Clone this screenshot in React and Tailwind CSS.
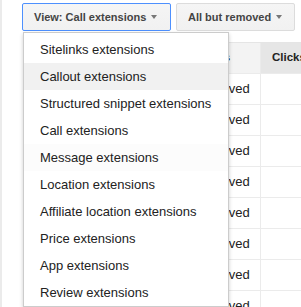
import React from "react";

const items = [
  "Sitelinks extensions",
  "Callout extensions",
  "Structured snippet extensions",
  "Call extensions",
  "Message extensions",
  "Location extensions",
  "Affiliate location extensions",
  "Price extensions",
  "App extensions",
  "Review extensions",
];

function Arrow() {
  return (
    <span className="ml-[5px] inline-block h-0 w-0 border-x-[3.5px] border-t-[4px] border-x-transparent border-t-[#777]" />
  );
}

export default function App() {
  return (
    <div className="relative h-[307px] w-[301px] overflow-hidden border-l-2 border-[#ebebeb] bg-white font-['Liberation_Sans',Arial,sans-serif]">
      {/* buttons */}
      <div className="flex gap-[5px] pl-[20px] pt-[3px]">
        <div className="flex h-[28px] w-[149px] shrink-0 items-center rounded-[2px] border border-[#4d90fe] bg-linear-to-b from-[#f5f5f5] to-[#f1f1f1] pl-[11px] text-[11px] font-bold text-[#444]">
          <span>View: Call extensions</span>
          <Arrow />
        </div>
        <div className="flex h-[28px] w-[119px] shrink-0 items-center rounded-[2px] border border-[#dcdcdc] bg-linear-to-b from-[#f5f5f5] to-[#f1f1f1] pl-[11px] text-[11px] font-bold text-[#444]">
          <span className="whitespace-nowrap">All but removed</span>
          <Arrow />
        </div>
      </div>

      {/* table behind */}
      <div className="ml-[24px] mt-[11px] w-[376px] border-t border-[#e5e5e5]">
        <div className="grid h-[31px] grid-cols-[161px_74px_141px] border-b border-[#ebebeb] text-[11.5px] font-bold text-[#222]">
          <div className="bg-[#f3f3f3]" />
          <div className="flex items-center border-r border-[#ebebeb] bg-[#f3f3f3] pl-[8px]">Status</div>
          <div className="flex items-center bg-[#e6e6e6] pl-[11px]">Clicks</div>
        </div>
        {Array.from({ length: 8 }).map((_, i) => (
          <div
            key={i}
            className="grid h-[31px] grid-cols-[161px_74px_141px] border-b border-[#ebebeb] text-[13px] text-[#222]"
          >
            <div />
            <div className="flex items-center border-r border-[#ebebeb] pl-[7px]">Removed</div>
            <div />
          </div>
        ))}
      </div>

      {/* dropdown menu */}
      <div className="absolute left-[21px] top-[32px] w-[206px] border border-[#ccc] bg-white pt-[3px] shadow-[0_2px_4px_rgba(0,0,0,0.2)]">
        {items.map((t, i) => (
          <div
            key={t}
            className={`flex h-[27px] items-center whitespace-nowrap pl-[16px] text-[13px] text-[#222] ${
              i === 1 ? "bg-[#f1f1f1]" : i === 4 ? "bg-[#fcfcfc]" : ""
            }`}
          >
            {t}
          </div>
        ))}
      </div>
    </div>
  );
}
